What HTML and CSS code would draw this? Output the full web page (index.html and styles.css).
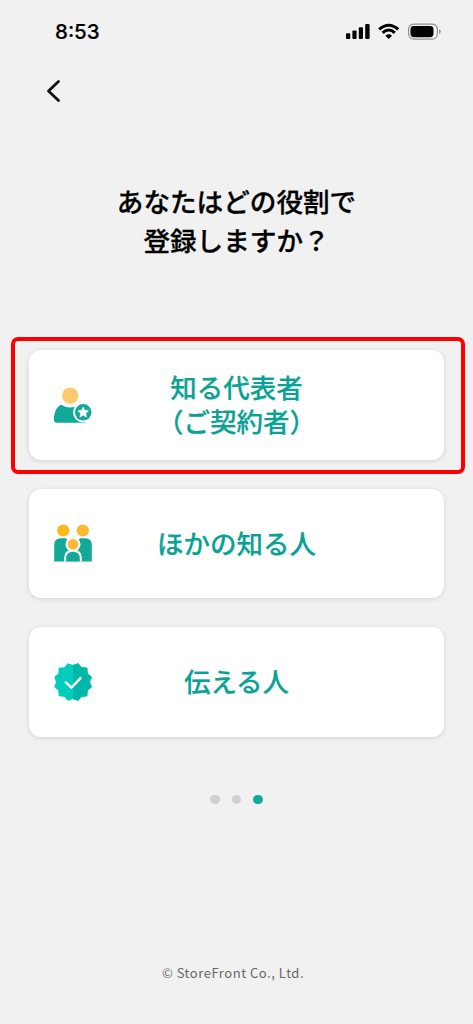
FILE: index.html
```html
<!DOCTYPE html>
<html lang="ja">
<head>
<meta charset="utf-8">
<title>役割の選択</title>
<link rel="stylesheet" href="styles.css">
</head>
<body>
<div class="screen">
  <header class="status">
    <span class="time">8:53</span>
    <svg class="status-icons" width="97" height="20" viewBox="0 0 97 20">
      <rect x="1" y="11.2" width="4.2" height="5.8" rx="1.1"/>
      <rect x="7.4" y="8.5" width="4.2" height="8.5" rx="1.1"/>
      <rect x="13.8" y="5.2" width="4.2" height="11.8" rx="1.1"/>
      <rect x="20.2" y="2" width="4.4" height="15" rx="1.1"/>
      <g fill="none" stroke="#000" stroke-width="3">
        <path d="M34.2 7.4Q43.7-1 53.2 7.4"/>
        <path d="M37.6 10.9Q43.7 5.2 49.8 10.9"/>
      </g>
      <path d="M40.4 13.7Q43.7 10.9 47 13.7L43.7 17Z"/>
      <rect x="63.6" y="2.1" width="28.8" height="15" rx="5" fill="none" stroke="#929292" stroke-width="1.2"/>
      <rect x="65.5" y="4" width="23" height="11.2" rx="3.4"/>
      <path d="M94 7.2Q95.8 8 95.8 9.6T94 12Z" fill="#929292"/>
    </svg>
  </header>
  <nav class="nav">
    <svg width="16" height="24" viewBox="0 0 16 24"><path d="M13.5 2.5 3.5 12l10 9.5" fill="none" stroke="#111" stroke-width="2.8" stroke-linecap="round" stroke-linejoin="round"/></svg>
  </nav>
  <h1 class="title">あなたはどの役割で<br>登録しますか？</h1>
  <main class="roles">
    <div class="selected">
      <button class="card">
        <svg class="icon" width="40" height="40" viewBox="0 0 40 40">
          <circle cx="17.2" cy="10.6" r="8.2" fill="#ffca6e"/>
          <path d="M8.2 19.8Q17 25.4 26 19.8C31 22 33.5 27 33.5 35Q33.5 37.8 31 37.8H4.2Q.8 37.8.8 34.6C.8 28.5 3.8 20.8 8.2 19.8Z" fill="#12a999"/>
          <circle cx="30.2" cy="27.3" r="10.2" fill="#fff"/>
          <circle cx="30.2" cy="27.3" r="8.3" fill="#12a999"/>
          <path d="m30.2 21.9 1.6 3.4 3.7.5-2.7 2.6.7 3.7-3.3-1.8-3.3 1.8.7-3.7-2.7-2.6 3.7-.5Z" fill="#fff" stroke="#fff" stroke-width=".5" stroke-linejoin="round"/>
        </svg>
        <span class="label"><span class="line">知る代表者</span><span class="line">（ご契約者）</span></span>
      </button>
    </div>
    <button class="card">
      <svg class="icon" width="40" height="40" viewBox="0 0 40 40">
        <circle cx="10.2" cy="7.5" r="6.1" fill="#fdb81a"/>
        <circle cx="29.8" cy="7.5" r="6.1" fill="#fdb832"/>
        <path d="M1.2 38.5V22Q1.2 15.3 8 15.3H12.8L20 22 27.2 15.3H32Q38.8 15.3 38.8 22V38.5Z" fill="#12a999"/>
        <circle cx="20" cy="21.2" r="7.5" fill="#fff"/>
        <path d="M11.2 38.5V35Q11.2 26.5 20 26.5T28.8 35V38.5Z" fill="#fff"/>
        <circle cx="20" cy="21.2" r="5.3" fill="#fdb832"/>
        <path d="M13.2 38.5V35.5Q13.2 28.8 20 28.8T26.8 35.5V38.5Z" fill="#12a999"/>
      </svg>
      <span class="label">ほかの知る人</span>
    </button>
    <button class="card">
      <svg class="icon" width="40" height="40" viewBox="0 0 40 40">
        <path d="M20 2.9 25.2 1.2 28.6 5.2 34.2 5.7 34.7 11.4 38.8 15 37 20 38.8 25 34.7 28.6 34.2 34.3 28.6 34.8 25.2 38.8 20 37.1 14.8 38.8 11.4 34.8 5.8 34.3 5.3 28.6 1.2 25 3 20 1.2 15 5.3 11.4 5.8 5.7 11.4 5.2 14.8 1.2Z" fill="#00cdbc"/>
        <path d="M20 2.9 25.2 1.2 28.6 5.2 34.2 5.7 34.7 11.4 38.8 15 37 20 38.8 25 34.7 28.6 34.2 34.3 28.6 34.8 25.2 38.8 20 37.1Z" fill="#00b8a8"/>
        <path d="m12.8 20.3 5.7 5.3 9-9.5" fill="none" stroke="#fff" stroke-width="2.5" stroke-linecap="round" stroke-linejoin="round"/>
      </svg>
      <span class="label">伝える人</span>
    </button>
  </main>
  <div class="dots"><i class="dot"></i><i class="dot"></i><i class="dot active"></i></div>
  <footer class="footer">© StoreFront Co., Ltd.</footer>
</div>
</body>
</html>
```
FILE: styles.css
```css
* { box-sizing: border-box; }
body {
  margin: 0;
  background: #f1f1f1;
  font-family: "Noto Sans CJK JP", sans-serif;
}
.screen {
  width: 473px;
  height: 1024px;
  display: flex;
  flex-direction: column;
  overflow: hidden;
}
.status {
  display: flex;
  justify-content: space-between;
  align-items: center;
  height: 44px;
  padding: 20px 28px 0 55px;
}
.time {
  font: 500 20.5px/24px Inter, sans-serif;
  color: #000;
  -webkit-text-stroke: .2px #000;
}
.status-icons { margin-right: 3px; }
.nav {
  height: 60px;
  padding: 35px 0 0 45px;
}
.nav svg { display: block; }
.title {
  margin: 77px 0 0;
  font-size: 26.6px;
  line-height: 39px;
  font-weight: 500;
  text-align: center;
  color: #000;
  -webkit-text-stroke: .3px #000;
}
.roles {
  display: flex;
  flex-direction: column;
  margin-top: 78px;
  padding: 0 29px;
  gap: 29px;
}
.selected {
  margin: 0 -21px -14px -18px;
  padding: 9px 17px 10px 14px;
  border: 4px solid #f00;
  border-radius: 7px;
}
.card {
  display: flex;
  align-items: center;
  width: 415px;
  height: 109.5px;
  padding: 0 24px;
  border: 0;
  border-radius: 12px;
  background: #fff;
  box-shadow: 0 1px 5px rgba(0, 0, 0, .13);
  font-family: inherit;
}
.icon { flex: none; }
.label {
  flex: 1;
  margin-right: 40px;
  padding-bottom: 1px;
  font-size: 26.5px;
  line-height: 34px;
  font-weight: 500;
  text-align: center;
  color: #0aa294;
  -webkit-text-stroke: .2px #0aa294;
  font-feature-settings: "halt";
}
.line { display: block; }
.dots {
  display: flex;
  gap: 12px;
  margin: 58px 0 0 210px;
}
.dot {
  width: 9.5px;
  height: 9.5px;
  border-radius: 50%;
  background: #d0d0d0;
}
.active { background: #12a999; }
.footer {
  margin: 159px 0 0 -7px;
  font: 400 13px/20px "Noto Sans CJK JP", sans-serif;
  letter-spacing: .53px;
  text-align: center;
  color: #666;
}
```
